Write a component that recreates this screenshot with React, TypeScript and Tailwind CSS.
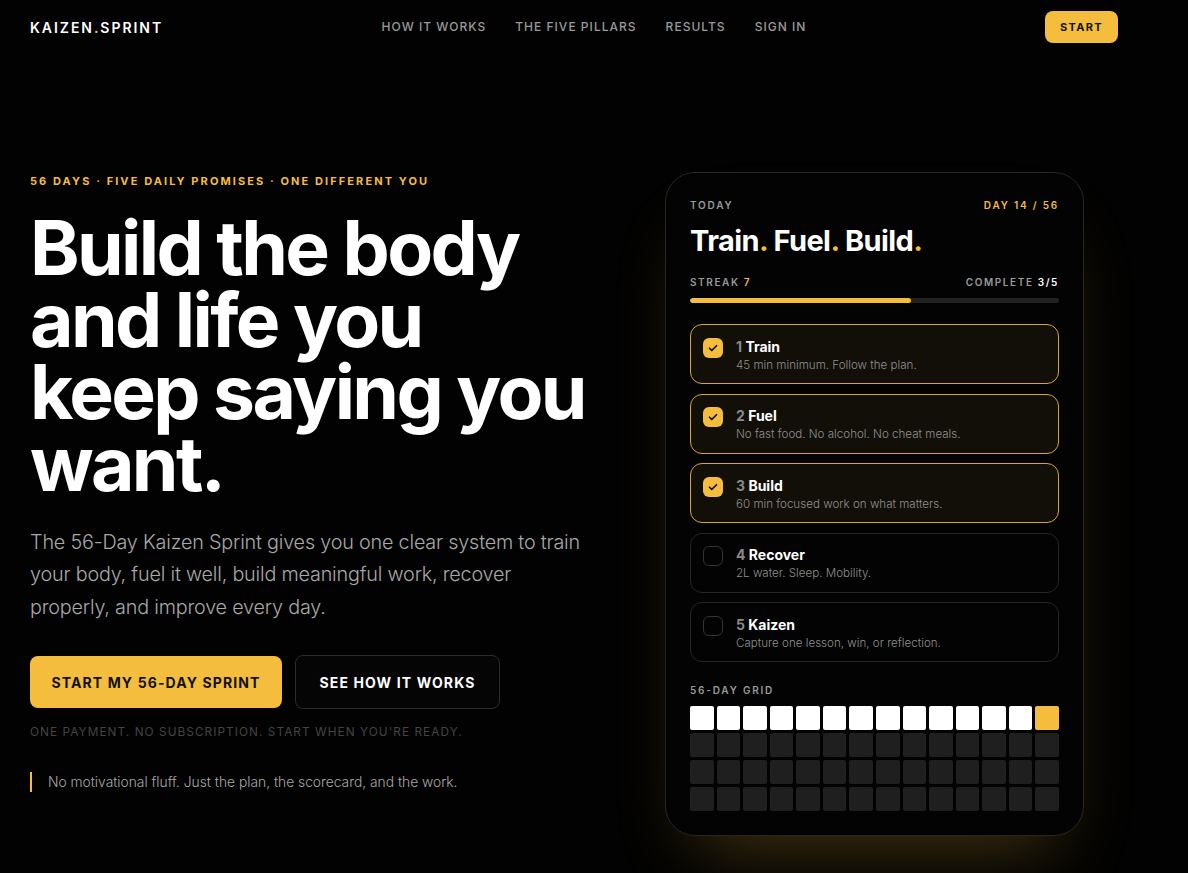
import React from "react";

function Check() {
  return (
    <svg width="12" height="12" viewBox="0 0 24 24" fill="none" stroke="#111" strokeWidth="3.5" strokeLinecap="round" strokeLinejoin="round">
      <path d="M5 12.5l4.5 4.5L19 7.5" />
    </svg>
  );
}

const tasks = [
  { n: 1, t: "Train", d: "45 min minimum. Follow the plan.", done: true },
  { n: 2, t: "Fuel", d: "No fast food. No alcohol. No cheat meals.", done: true },
  { n: 3, t: "Build", d: "60 min focused work on what matters.", done: true },
  { n: 4, t: "Recover", d: "2L water. Sleep. Mobility.", done: false },
  { n: 5, t: "Kaizen", d: "Capture one lesson, win, or reflection.", done: false },
];

export default function App() {
  const cells = Array.from({ length: 56 }, (_, i) => i);
  return (
    <div className="min-h-[873px] bg-[#020202] text-white overflow-hidden" style={{ fontFamily: "Inter, 'Noto Sans', sans-serif" }}>
      {/* Nav */}
      <header className="h-[54px] px-[30px] grid grid-cols-[1fr_auto_1fr] items-center">
        <div className="text-[14px] font-semibold tracking-[0.14em]">
          KAIZEN<span className="text-[#f5bd3d]">.</span>SPRINT
        </div>
        <nav className="flex gap-[29px] text-[12px] font-medium tracking-[0.085em] text-[#9a9a9a]">
          <span>HOW IT WORKS</span>
          <span>THE FIVE PILLARS</span>
          <span>RESULTS</span>
          <span>SIGN IN</span>
        </nav>
        <div className="flex justify-end pr-[40px]">
          <button className="h-[32px] w-[73px] rounded-lg bg-[#f5bd3d] text-[#111] text-[11px] font-bold tracking-[0.12em]">
            START
          </button>
        </div>
      </header>

      {/* Hero */}
      <main className="flex pl-[30px] pt-[119px]">
        <section className="w-[590px] shrink-0">
          <p className="text-[11px] font-bold tracking-[0.19em] text-[#f5bd3d]">
            56 DAYS · FIVE DAILY PROMISES · ONE DIFFERENT YOU
          </p>
          <h1 className="mt-[22px] text-[75px] leading-[72px] font-bold tracking-[-0.035em] text-white">
            <span className="block">Build the body</span>
            <span className="block">and life you</span>
            <span className="block">keep saying you</span>
            <span className="block">want.</span>
          </h1>
          <p className="mt-[26px] text-[19.8px] leading-[32.5px] font-light text-[#a8a8a8] w-[560px] tracking-[-0.01em]">
            The 56-Day Kaizen Sprint gives you one clear system to train your body, fuel it well, build meaningful work, recover properly, and improve every day.
          </p>
          <div className="mt-[32px] flex gap-[13px] items-center">
            <button className="h-[52px] w-[252px] rounded-lg bg-[#f5bd3d] text-[#111] text-[14px] font-bold tracking-[0.08em]">
              START MY 56-DAY SPRINT
            </button>
            <button className="h-[54px] w-[205px] rounded-lg border border-[#2c2c2c] bg-[#050505] text-white text-[14px] font-bold tracking-[0.08em]">
              SEE HOW IT WORKS
            </button>
          </div>
          <p className="mt-[15px] text-[11.8px] tracking-[0.09em] text-[#444444]">
            ONE PAYMENT. NO SUBSCRIPTION. START WHEN YOU'RE READY.
          </p>
          <div className="mt-[30px] flex items-center gap-[16px]">
            <div className="w-[2px] h-[20px] bg-[#f5bd3d]" />
            <p className="text-[13.8px] text-[#a8a8a8] font-light">
              No motivational fluff. Just the plan, the scorecard, and the work.
            </p>
          </div>
        </section>

        <section className="ml-[45px] -mt-[1px]">
          <div className="w-[419px] rounded-[30px] border border-[#262626] bg-[#030303] px-[24px] pt-[25px] pb-[24px] shadow-[0_40px_70px_-30px_rgba(245,189,61,0.28)]">
            <div className="flex justify-between text-[10px] font-semibold tracking-[0.18em]">
              <span className="text-[#9a9a9a]">TODAY</span>
              <span className="text-[#f5bd3d]">DAY 14 / 56</span>
            </div>
            <h2 className="mt-[10px] text-[29px] leading-[36px] font-bold tracking-[-0.02em]">
              Train<span className="text-[#f5bd3d]">.</span> Fuel<span className="text-[#f5bd3d]">.</span> Build<span className="text-[#f5bd3d]">.</span>
            </h2>
            <div className="mt-[16px] flex justify-between text-[10px] font-semibold tracking-[0.16em] text-[#9a9a9a]">
              <span>
                STREAK <span className="text-[#f5bd3d]">7</span>
              </span>
              <span>
                COMPLETE <span className="text-white">3/5</span>
              </span>
            </div>
            <div className="mt-[8px] h-[5px] rounded-full bg-[#222222] overflow-hidden">
              <div className="h-full w-[60%] bg-[#f5bd3d] rounded-full" />
            </div>

            <div className="mt-[21px] flex flex-col gap-[9.5px]">
              {tasks.map((t) => (
                <div
                  key={t.n}
                  className={
                    t.done
                      ? "h-[60px] rounded-[12px] border border-[#d9a532] bg-[#120f08] flex items-center pl-[12px] gap-[13px]"
                      : "h-[60px] rounded-[12px] border border-[#262626] bg-[#030303] flex items-center pl-[12px] gap-[13px]"
                  }
                >
                  {t.done ? (
                    <div className="w-[20px] h-[20px] rounded-[6px] bg-[#f5bd3d] flex items-center justify-center -mt-[13px]">
                      <Check />
                    </div>
                  ) : (
                    <div className="w-[20px] h-[20px] rounded-[6px] border border-[#333333] -mt-[13px]" />
                  )}
                  <div className="pt-[3px]">
                    <div className="text-[14px] leading-[18px] font-bold">
                      <span className="text-[#8a8a8a]">{t.n}</span> {t.t}
                    </div>
                    <div className="text-[11.6px] leading-[18px] text-[#8f8f8f] font-light">{t.d}</div>
                  </div>
                </div>
              ))}
            </div>

            <p className="mt-[21px] text-[10px] font-semibold tracking-[0.18em] text-[#9a9a9a]">56-DAY GRID</p>
            <div className="mt-[8px] grid grid-cols-[repeat(14,minmax(0,1fr))] gap-[3px]">
              {cells.map((i) => (
                <div
                  key={i}
                  className={
                    i < 13
                      ? "h-[24px] rounded-[2px] bg-white"
                      : i === 13
                      ? "h-[24px] rounded-[2px] bg-[#f5bd3d]"
                      : "h-[24px] rounded-[2px] bg-[#1f1f1f]"
                  }
                />
              ))}
            </div>
          </div>
        </section>
      </main>
    </div>
  );
}
